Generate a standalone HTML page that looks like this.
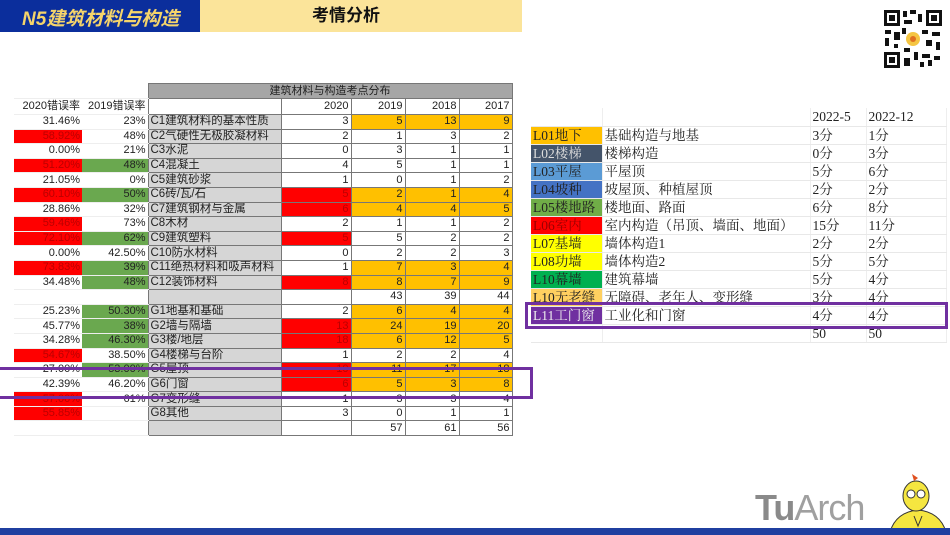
<!DOCTYPE html>
<html><head><meta charset="utf-8"><style>
*{margin:0;padding:0;box-sizing:border-box}
body{width:950px;height:535px;position:relative;overflow:hidden;background:#fff;font-family:"Liberation Sans","Noto Sans CJK SC",sans-serif}
.hb{position:absolute;left:0;top:0;width:200px;height:32px;background:#0b2e9c}
.hb span{position:absolute;left:22px;top:4px;font-size:19px;font-weight:bold;font-style:italic;color:#f5d46a}
.hy{position:absolute;left:200px;top:0;width:322px;height:32px;background:#fbe49a;text-align:center}
.hy span{font-size:17px;font-weight:bold;line-height:32px;color:#111;margin-left:-30px}
table.l{position:absolute;left:14px;top:83px;border-collapse:collapse;table-layout:fixed;font-size:11px;color:#222}
table.l td{height:14.6px;line-height:13px;padding:0 2px;text-align:right;white-space:nowrap;overflow:hidden;border:1px solid #777}
table.l td.r{border:none;border-bottom:1px solid #eee}
table.l td.n{background:#d6d6d6;text-align:left;font-size:11.5px}
.R{background:#f00;color:#b00}
.G{background:#6aa84f}
.O{background:#ffc000}
table.r{position:absolute;left:531px;top:108px;border-collapse:collapse;table-layout:fixed;font-family:"Liberation Serif","Noto Serif CJK SC",serif;font-size:13.5px;color:#222}
table.r td{height:18px;line-height:17px;padding:0 2px;border-bottom:1px solid #e8e8e8;border-right:1px solid #eee;white-space:nowrap;overflow:hidden}
.box{position:absolute;border:3px solid #7030a0}
.bar{position:absolute;left:0;top:528px;width:950px;height:7px;background:#1f3fa0}
</style></head><body>
<div class="hb"><span>N5建筑材料与构造</span></div>
<div class="hy"><span>考情分析</span></div>
<svg style="position:absolute;left:882px;top:8px" width="62" height="62" viewBox="0 0 62 62">
<rect width="62" height="62" fill="#fff"/>
<g fill="#111">
<rect x="2" y="2" width="16" height="16"/><rect x="44" y="2" width="16" height="16"/><rect x="2" y="44" width="16" height="16"/>
</g>
<g fill="#fff"><rect x="5" y="5" width="10" height="10"/><rect x="47" y="5" width="10" height="10"/><rect x="5" y="47" width="10" height="10"/></g>
<g fill="#111"><rect x="7" y="7" width="6" height="6"/><rect x="49" y="7" width="6" height="6"/><rect x="7" y="49" width="6" height="6"/>
<rect x="21" y="3" width="4" height="6"/><rect x="28" y="2" width="6" height="4"/><rect x="36" y="6" width="4" height="8"/><rect x="22" y="12" width="8" height="4"/>
<rect x="3" y="22" width="6" height="4"/><rect x="12" y="24" width="6" height="8"/><rect x="3" y="30" width="4" height="8"/><rect x="20" y="20" width="4" height="6"/>
<rect x="40" y="22" width="6" height="4"/><rect x="50" y="24" width="8" height="4"/><rect x="44" y="32" width="6" height="6"/><rect x="54" y="34" width="4" height="8"/>
<rect x="22" y="40" width="6" height="4"/><rect x="32" y="44" width="4" height="8"/><rect x="22" y="50" width="6" height="8"/><rect x="40" y="46" width="8" height="4"/>
<rect x="46" y="52" width="4" height="6"/><rect x="52" y="48" width="6" height="4"/><rect x="38" y="54" width="4" height="5"/><rect x="12" y="36" width="4" height="4"/></g>
<circle cx="31" cy="31" r="7" fill="#f5c542"/><circle cx="31" cy="31" r="3" fill="#e07020"/>
</svg>

<table class="l">
<colgroup><col style="width:68px"><col style="width:66px"><col style="width:133px"><col style="width:70px"><col style="width:54px"><col style="width:54px"><col style="width:53px"></colgroup>
<tr><td class="r" style="height:15px"></td><td class="r"></td><td colspan="5" style="background:#a6a6a6;text-align:center;height:15px">建筑材料与构造考点分布</td></tr>
<tr><td class="r" style="height:16px">2020错误率</td><td class="r">2019错误率</td><td></td><td>2020</td><td>2019</td><td>2018</td><td>2017</td></tr>
<tr><td class="r">31.46%</td><td class="r">23%</td><td class="n">C1建筑材料的基本性质</td><td>3</td><td class="O">5</td><td class="O">13</td><td class="O">9</td></tr>
<tr><td class="r R">58.92%</td><td class="r">48%</td><td class="n">C2气硬性无极胶凝材料</td><td>2</td><td>1</td><td>3</td><td>2</td></tr>
<tr><td class="r">0.00%</td><td class="r">21%</td><td class="n">C3水泥</td><td>0</td><td>3</td><td>1</td><td>1</td></tr>
<tr><td class="r R">51.20%</td><td class="r G">48%</td><td class="n">C4混凝土</td><td>4</td><td>5</td><td>1</td><td>1</td></tr>
<tr><td class="r">21.05%</td><td class="r">0%</td><td class="n">C5建筑砂浆</td><td>1</td><td>0</td><td>1</td><td>2</td></tr>
<tr><td class="r R">60.10%</td><td class="r G">50%</td><td class="n">C6砖/瓦/石</td><td class="R">5</td><td class="O">2</td><td class="O">1</td><td class="O">4</td></tr>
<tr><td class="r">28.86%</td><td class="r">32%</td><td class="n">C7建筑钢材与金属</td><td class="R">6</td><td class="O">4</td><td class="O">4</td><td class="O">5</td></tr>
<tr><td class="r R">59.46%</td><td class="r">73%</td><td class="n">C8木材</td><td>2</td><td>1</td><td>1</td><td>2</td></tr>
<tr><td class="r R">72.10%</td><td class="r G">62%</td><td class="n">C9建筑塑料</td><td class="R">5</td><td>5</td><td>2</td><td>2</td></tr>
<tr><td class="r">0.00%</td><td class="r">42.50%</td><td class="n">C10防水材料</td><td>0</td><td>2</td><td>2</td><td>3</td></tr>
<tr><td class="r R">73.83%</td><td class="r G">39%</td><td class="n">C11绝热材料和吸声材料</td><td>1</td><td class="O">7</td><td class="O">3</td><td class="O">4</td></tr>
<tr><td class="r">34.48%</td><td class="r G">48%</td><td class="n">C12装饰材料</td><td class="R">8</td><td class="O">8</td><td class="O">7</td><td class="O">9</td></tr>
<tr><td class="r"></td><td class="r"></td><td class="n"></td><td></td><td>43</td><td>39</td><td>44</td></tr>
<tr><td class="r">25.23%</td><td class="r G">50.30%</td><td class="n">G1地基和基础</td><td>2</td><td class="O">6</td><td class="O">4</td><td class="O">4</td></tr>
<tr><td class="r">45.77%</td><td class="r G">38%</td><td class="n">G2墙与隔墙</td><td class="R">13</td><td class="O">24</td><td class="O">19</td><td class="O">20</td></tr>
<tr><td class="r">34.28%</td><td class="r G">46.30%</td><td class="n">G3楼/地层</td><td class="R">18</td><td class="O">6</td><td class="O">12</td><td class="O">5</td></tr>
<tr><td class="r R">54.67%</td><td class="r">38.50%</td><td class="n">G4楼梯与台阶</td><td>1</td><td>2</td><td>2</td><td>4</td></tr>
<tr><td class="r">27.00%</td><td class="r G">53.00%</td><td class="n">G5屋顶</td><td class="R">10</td><td class="O">11</td><td class="O">17</td><td class="O">18</td></tr>
<tr><td class="r">42.39%</td><td class="r">46.20%</td><td class="n">G6门窗</td><td class="R">6</td><td class="O">5</td><td class="O">3</td><td class="O">8</td></tr>
<tr><td class="r R">57.00%</td><td class="r">61%</td><td class="n">G7变形缝</td><td>1</td><td>3</td><td>3</td><td>4</td></tr>
<tr><td class="r R">55.85%</td><td class="r"></td><td class="n">G8其他</td><td>3</td><td>0</td><td>1</td><td>1</td></tr>
<tr><td class="r"></td><td class="r"></td><td class="n"></td><td></td><td>57</td><td>61</td><td>56</td></tr>
</table>
<div class="box" style="left:-4px;top:367px;width:537px;height:32px"></div>

<table class="r">
<colgroup><col style="width:71px"><col style="width:208px"><col style="width:56px"><col style="width:80px"></colgroup>
<tr><td style="border-right:1px solid #eee"></td><td></td><td>2022-5</td><td>2022-12</td></tr>
<tr><td style="background:#ffc000">L01地下</td><td>基础构造与地基</td><td>3分</td><td>1分</td></tr>
<tr><td style="background:#44546a;color:#ddd">L02楼梯</td><td>楼梯构造</td><td>0分</td><td>3分</td></tr>
<tr><td style="background:#5b9bd5">L03平屋</td><td>平屋顶</td><td>5分</td><td>6分</td></tr>
<tr><td style="background:#4472c4">L04坡种</td><td>坡屋顶、种植屋顶</td><td>2分</td><td>2分</td></tr>
<tr><td style="background:#70ad47">L05楼地路</td><td>楼地面、路面</td><td>6分</td><td>8分</td></tr>
<tr><td style="background:#f00;color:#900">L06室内</td><td>室内构造（吊顶、墙面、地面）</td><td>15分</td><td>11分</td></tr>
<tr><td style="background:#ff0">L07基墙</td><td>墙体构造1</td><td>2分</td><td>2分</td></tr>
<tr><td style="background:#ff0">L08功墙</td><td>墙体构造2</td><td>5分</td><td>5分</td></tr>
<tr><td style="background:#00b050">L10幕墙</td><td>建筑幕墙</td><td>5分</td><td>4分</td></tr>
<tr><td style="background:#ffd060">L10无老缝</td><td>无障碍、老年人、变形缝</td><td>3分</td><td>4分</td></tr>
<tr><td style="background:#7030a0;color:#eee">L11工门窗</td><td>工业化和门窗</td><td>4分</td><td>4分</td></tr>
<tr><td></td><td></td><td>50</td><td>50</td></tr>
</table>
<div class="box" style="left:525px;top:302px;width:423px;height:27px"></div>

<div style="position:absolute;left:755px;top:487px;font-size:36px;color:#a0a0a0;letter-spacing:-1px"><b style="color:#8a8a8a">Tu</b>Arch</div>
<svg style="position:absolute;left:888px;top:472px" width="60" height="60" viewBox="0 0 60 60">
<path d="M2 60 Q8 40 30 38 Q52 40 58 60Z" fill="#f5e640" stroke="#333"/>
<ellipse cx="28" cy="24" rx="13" ry="15" fill="#f5e640" stroke="#333"/>
<path d="M26 9 L24 2 L30 6Z" fill="#e05020"/>
<circle cx="23" cy="22" r="4" fill="#fff" stroke="#333"/><circle cx="33" cy="22" r="4" fill="#fff" stroke="#333"/>
<path d="M26 44 L30 54 L34 44" fill="#f5e640" stroke="#333"/>
</svg>
<div class="bar"></div>
</body></html>
